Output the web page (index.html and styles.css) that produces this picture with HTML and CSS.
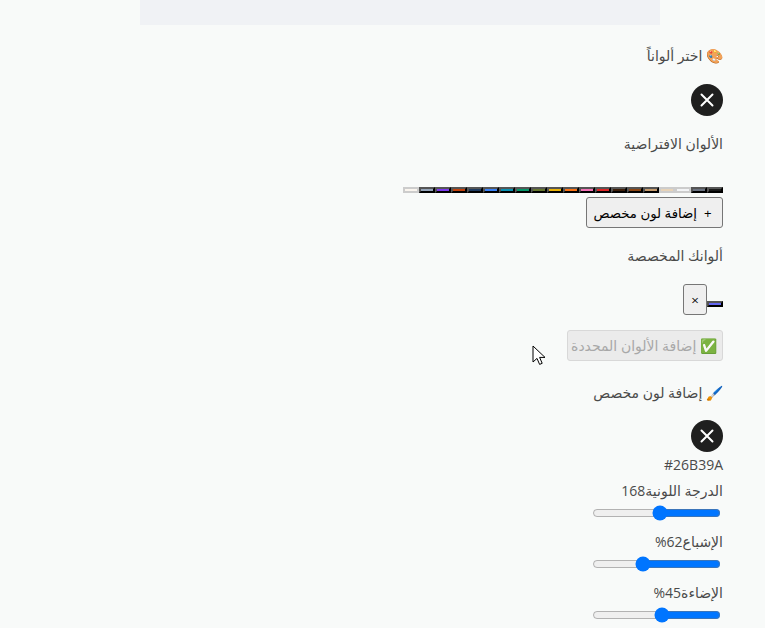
FILE: index.html
```html
<!DOCTYPE html>
<html lang="ar" dir="rtl">
<head>
    <meta charset="UTF-8">
    <meta name="viewport" content="width=device-width, initial-scale=1.0">
    <title>إضافة لون مخصص</title>
    <link rel="stylesheet" href="styles.css">
</head>
<body>
    <div class="top-panel"></div>

    <div class="picker">
        <p class="section-label">🎨 اختر ألواناً</p>
        <button class="close-btn" aria-label="إغلاق">
            <svg width="14" height="14" viewBox="0 0 14 14"><path d="M1.500 1.500l11 11M12.500 1.500l-11 11"/></svg>
        </button>

        <p class="section-label default-label">الألوان الافتراضية</p>
        <div class="swatches">
            <span class="swatch" style="background:#1a1a1a"></span>
            <span class="swatch" style="background:#6b7280"></span>
            <span class="swatch light" style="background:#f3f4f6"></span>
            <span class="swatch light" style="background:#e7d3b8"></span>
            <span class="swatch" style="background:#c49a6c"></span>
            <span class="swatch" style="background:#8b4513"></span>
            <span class="swatch" style="background:#3d1f0a"></span>
            <span class="swatch" style="background:#dc2626"></span>
            <span class="swatch" style="background:#f472b6"></span>
            <span class="swatch" style="background:#f97316"></span>
            <span class="swatch" style="background:#eab308"></span>
            <span class="swatch" style="background:#65762f"></span>
            <span class="swatch" style="background:#059669"></span>
            <span class="swatch" style="background:#0891b2"></span>
            <span class="swatch" style="background:#3b82f6"></span>
            <span class="swatch" style="background:#1e3a5f"></span>
            <span class="swatch" style="background:#c2410c"></span>
            <span class="swatch" style="background:#7c3aed"></span>
            <span class="swatch" style="background:#94a3b8"></span>
            <span class="swatch light" style="background:#faf5ef"></span>
        </div>
        <button class="add-btn">+ &nbsp;إضافة لون مخصص</button>

        <p class="section-label custom-label">ألوانك المخصصة</p>
        <div class="custom-row">
            <span class="swatch" style="background:#6366f1"></span>
            <button class="remove-btn">×</button>
        </div>
        <button class="apply-btn" disabled>✅ إضافة الألوان المحددة</button>

        <p class="section-label add-label">🖌️ إضافة لون مخصص</p>
        <button class="close-btn close-btn-tight" aria-label="إغلاق">
            <svg width="14" height="14" viewBox="0 0 14 14"><path d="M1.500 1.500l11 11M12.500 1.500l-11 11"/></svg>
        </button>
        <div class="hex-value">#26B39A</div>

        <label class="slider-label">الدرجة اللونية<span>168</span></label>
        <input class="slider" type="range" min="0" max="360" value="168">
        <label class="slider-label">الإشباع<span>62%</span></label>
        <input class="slider" type="range" min="0" max="100" value="62">
        <label class="slider-label">الإضاءة<span>45%</span></label>
        <input class="slider" type="range" min="0" max="100" value="45">
    </div>

    <svg class="cursor" width="14" height="21" viewBox="0 0 14 21"><path d="M1 1v16l4-3.600 2.600 6 2.600-1.100-2.600-5.900h5.400z"/></svg>
</body>
</html>
```

FILE: styles.css
```css
html, body {
    height: 100%;
}
body {
    margin: 0;
    background-color: #f8faf9;
    color: #4a4a4a;
    font-family: "Open Sans", "DejaVu Sans", sans-serif;
    font-size: 14px;
    overflow: hidden;
}
.top-panel {
    width: 520px;
    height: 25px;
    margin: 0 105px 0 auto;
    background-color: #f0f2f5;
}
.picker {
    padding: 0 42px 0 0;
}
.section-label {
    margin: 0;
    padding-top: 21px;
    line-height: 20px;
}
.close-btn {
    display: flex;
    align-items: center;
    justify-content: center;
    width: 32px;
    height: 32px;
    margin-top: 18px;
    padding: 0;
    border: none;
    border-radius: 50%;
    background-color: #1f1f1f;
}
.close-btn-tight {
    margin-top: 17px;
}
.close-btn svg path {
    stroke: #fff;
    stroke-width: 2;
    stroke-linecap: round;
    fill: none;
}
.default-label {
    padding-top: 18px;
}
.swatches {
    display: flex;
    margin-top: 33px;
}
.swatch {
    display: block;
    width: 16px;
    height: 6px;
    box-sizing: border-box;
    border: 2px solid #000;
    border-top-color: #555;
    border-left-color: #555;
}
.swatch.light {
    border-color: #ccc;
}
.add-btn,
.remove-btn,
.apply-btn {
    display: block;
    font-family: inherit;
    border-radius: 3px;
    border: 1px solid #767676;
    background-color: #efefef;
    color: #000;
}
.add-btn {
    margin-top: 4px;
    height: 31px;
    width: 137px;
    font-size: 13.3px;
    padding: 0 4px 0 0;
}
.custom-label {
    padding-top: 18px;
}
.custom-row {
    display: flex;
    align-items: center;
    margin-top: 18px;
}
.custom-row .swatch {
    margin-top: 9px;
}
.remove-btn {
    width: 24px;
    height: 31px;
    padding: 0;
    font-size: 13.3px;
}
.apply-btn {
    margin-top: 15px;
    width: 156px;
    height: 31px;
    padding: 0 2px 0 0;
    font-size: 14px;
    color: #a8a8a8;
    background-color: #ebebeb;
    border-color: #d8d8d8;
}
.add-label {
    padding-top: 22px;
}
.hex-value {
    margin-top: 4px;
    line-height: 18px;
}
.slider-label {
    display: block;
    margin-top: 8px;
    line-height: 18px;
}
.slider + .slider-label {
    margin-top: 12px;
}
.slider {
    display: block;
    width: 129px;
    height: 16px;
    margin: 5px 2px 0 0;
    direction: rtl;
}
.cursor {
    position: absolute;
    left: 532px;
    top: 345px;
}
.cursor path {
    fill: #fff;
    stroke: #000;
    stroke-width: 1;
}
```
